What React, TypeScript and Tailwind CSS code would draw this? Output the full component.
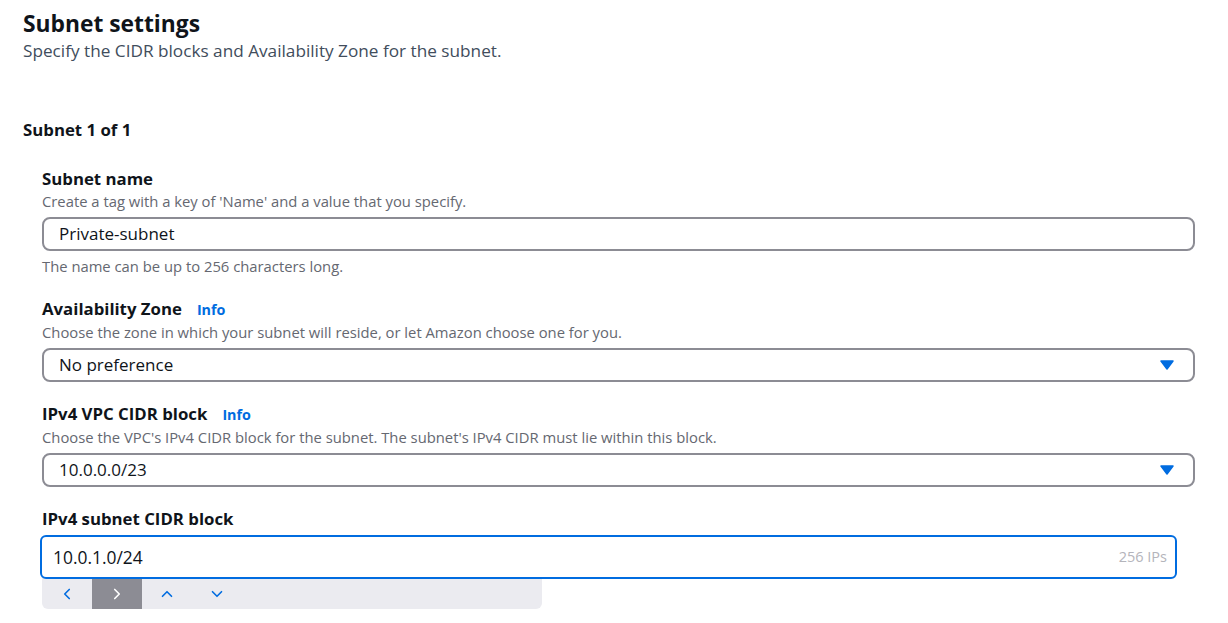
import { ChevronLeft, ChevronRight, ChevronUp, ChevronDown } from "lucide-react";

const Caret = () => (
  <svg width="14" height="10" viewBox="0 0 14 10" className="shrink-0">
    <polygon points="1,1 13,1 7,9" fill="#006ce0" stroke="#006ce0" strokeWidth="1.5" strokeLinejoin="round" />
  </svg>
);

const Label = ({ text, info }: { text: string; info?: boolean }) => (
  <div className="flex items-baseline gap-[15px] text-[16.8px] font-bold leading-[22px] text-[#0f141a]">
    <span>{text}</span>
    {info && <span className="text-[14.3px] text-[#006ce0]">Info</span>}
  </div>
);

const Desc = ({ text }: { text: string }) => (
  <div className="text-[14.8px] leading-[22px] text-[#656871]">{text}</div>
);

const Select = ({ value }: { value: string }) => (
  <div className="mt-[5px] flex h-[34px] w-[1153px] items-center justify-between rounded-[8px] border-2 border-[#8c8c94] pl-[15px] pr-[19px] text-[17px] text-[#0f141a]">
    <span>{value}</span>
    <Caret />
  </div>
);

export default function App() {
  return (
    <div className="min-h-[623px] bg-white pl-[23px] pt-[8px] font-['Open_Sans',sans-serif]">
      <h1 className="text-[22.8px] font-bold leading-[32px] text-[#0f141a]">Subnet settings</h1>
      <p className="text-[17.2px] leading-[22px] text-[#414d5c]">
        Specify the CIDR blocks and Availability Zone for the subnet.
      </p>

      <h2 className="mt-[57px] text-[16.8px] font-bold leading-[22px] text-[#0f141a]">Subnet 1 of 1</h2>

      <div className="mt-[27px] flex flex-col pl-[19px]">
        <Label text="Subnet name" />
        <Desc text="Create a tag with a key of 'Name' and a value that you specify." />
        <div className="mt-[5px] flex h-[34px] w-[1153px] items-center rounded-[8px] border-2 border-[#8c8c94] pl-[15px] text-[17px] text-[#0f141a]">
          Private-subnet
        </div>
        <div className="mt-[5px] text-[14.8px] leading-[20px] text-[#656871]">
          The name can be up to 256 characters long.
        </div>

        <div className="mt-[22px]">
          <Label text="Availability Zone" info />
          <Desc text="Choose the zone in which your subnet will reside, or let Amazon choose one for you." />
          <Select value="No preference" />
        </div>

        <div className="mt-[21px]">
          <Label text="IPv4 VPC CIDR block" info />
          <Desc text="Choose the VPC's IPv4 CIDR block for the subnet. The subnet's IPv4 CIDR must lie within this block." />
          <Select value="10.0.0.0/23" />
        </div>

        <div className="mt-[21px]">
          <Label text="IPv4 subnet CIDR block" />
          <div className="relative z-10 -ml-[2px] mt-[5px] flex h-[44px] w-[1137px] items-center justify-between rounded-[6px] border-2 border-[#006ce0] bg-white pl-[11px] pr-[8px]">
            <span className="text-[17.4px] text-[#0f141a]">10.0.1.0/24</span>
            <span className="text-[14.5px] text-[#b4b4bb]">256 IPs</span>
          </div>
          <div className="-mt-[1px] flex h-[31px] w-[500px] rounded-b-[6px] bg-[#ebebf0]">
            <div className="flex w-[50px] items-center justify-center text-[#006ce0]">
              <ChevronLeft size={18} strokeWidth={2.2} />
            </div>
            <div className="flex w-[50px] items-center justify-center bg-[#8c8c94] text-white">
              <ChevronRight size={18} strokeWidth={2.2} />
            </div>
            <div className="flex w-[50px] items-center justify-center text-[#006ce0]">
              <ChevronUp size={18} strokeWidth={2.2} />
            </div>
            <div className="flex w-[50px] items-center justify-center text-[#006ce0]">
              <ChevronDown size={18} strokeWidth={2.2} />
            </div>
          </div>
        </div>
      </div>
    </div>
  );
}
